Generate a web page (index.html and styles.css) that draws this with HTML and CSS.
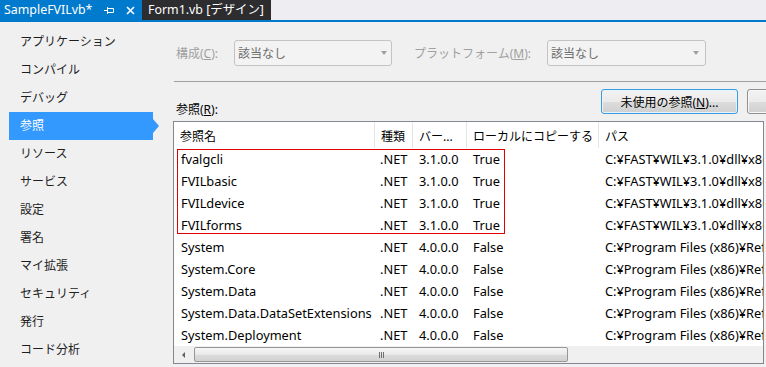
FILE: index.html
```html
<!DOCTYPE html>
<html lang="ja">
<head>
<meta charset="utf-8">
<title>SampleFVILvb</title>
<link rel="stylesheet" href="styles.css">
</head>
<body>
<div class="tabbar">
  <div class="tab tab-active">
    <span class="tab-title">SampleFVILvb*</span>
    <svg class="pin" width="10" height="8" viewBox="0 0 10 8"><path d="M0 4.5H3.5M3.5 1V8M3.5 2.5H9.5V6.5H3.5" fill="none" stroke="#fff" stroke-width="1"/></svg>
    <svg class="close" width="9" height="9" viewBox="0 0 9 9"><path d="M1 1L8 8M8 1L1 8" fill="none" stroke="#fff" stroke-width="1.6"/></svg>
  </div>
  <div class="tab tab-dark"><span class="tab-title">Form1.vb [デザイン]</span></div>
</div>
<div class="page">
  <nav class="sidebar">
    <div class="nav-item">アプリケーション</div>
    <div class="nav-item">コンパイル</div>
    <div class="nav-item">デバッグ</div>
    <div class="nav-item selected">参照</div>
    <div class="nav-item">リソース</div>
    <div class="nav-item">サービス</div>
    <div class="nav-item">設定</div>
    <div class="nav-item">署名</div>
    <div class="nav-item">マイ拡張</div>
    <div class="nav-item">セキュリティ</div>
    <div class="nav-item">発行</div>
    <div class="nav-item">コード分析</div>
  </nav>
  <main class="main">
    <div class="config">
      <span class="cfg-label l1">構成(<u>C</u>):</span>
      <div class="combo c1"><span>該当なし</span><i class="caret"></i></div>
      <span class="cfg-label l2">プラットフォーム(<u>M</u>):</span>
      <div class="combo c2"><span>該当なし</span><i class="caret"></i></div>
    </div>
    <div class="rule"></div>
    <div class="refs-head">
      <span class="refs-label">参照(<u>R</u>):</span>
      <button class="btn btn-primary">未使用の参照(<u>N</u>)...</button>
      <button class="btn btn-cut"></button>
    </div>
    <div class="table">
      <div class="row head">
        <div class="cell">参照名</div>
        <div class="cell">種類</div>
        <div class="cell">バー...</div>
        <div class="cell">ローカルにコピーする</div>
        <div class="cell">パス</div>
      </div>
      <div class="row"><div class="cell name">fvalgcli</div><div class="cell">.NET</div><div class="cell">3.1.0.0</div><div class="cell">True</div><div class="cell">C:¥FAST¥WIL¥3.1.0¥dll¥x86¥</div></div>
      <div class="row"><div class="cell name">FVILbasic</div><div class="cell">.NET</div><div class="cell">3.1.0.0</div><div class="cell">True</div><div class="cell">C:¥FAST¥WIL¥3.1.0¥dll¥x86¥</div></div>
      <div class="row"><div class="cell name">FVILdevice</div><div class="cell">.NET</div><div class="cell">3.1.0.0</div><div class="cell">True</div><div class="cell">C:¥FAST¥WIL¥3.1.0¥dll¥x86¥</div></div>
      <div class="row"><div class="cell name">FVILforms</div><div class="cell">.NET</div><div class="cell">3.1.0.0</div><div class="cell">True</div><div class="cell">C:¥FAST¥WIL¥3.1.0¥dll¥x86¥</div></div>
      <div class="row"><div class="cell name">System</div><div class="cell">.NET</div><div class="cell">4.0.0.0</div><div class="cell">False</div><div class="cell">C:¥Program Files (x86)¥Reference</div></div>
      <div class="row"><div class="cell name">System.Core</div><div class="cell">.NET</div><div class="cell">4.0.0.0</div><div class="cell">False</div><div class="cell">C:¥Program Files (x86)¥Reference</div></div>
      <div class="row"><div class="cell name">System.Data</div><div class="cell">.NET</div><div class="cell">4.0.0.0</div><div class="cell">False</div><div class="cell">C:¥Program Files (x86)¥Reference</div></div>
      <div class="row"><div class="cell name">System.Data.DataSetExtensions</div><div class="cell">.NET</div><div class="cell">4.0.0.0</div><div class="cell">False</div><div class="cell">C:¥Program Files (x86)¥Reference</div></div>
      <div class="row"><div class="cell name">System.Deployment</div><div class="cell">.NET</div><div class="cell">4.0.0.0</div><div class="cell">False</div><div class="cell">C:¥Program Files (x86)¥Reference</div></div>
      <div class="hscroll">
        <div class="sb-btn"><i class="sb-arrow"></i></div>
        <div class="thumb"><i class="grip"></i></div>
      </div>
      <div class="highlight"></div>
    </div>
  </main>
</div>
</body>
</html>
```
FILE: styles.css
```css
* { box-sizing: border-box; margin: 0; padding: 0; }
html, body { width: 766px; height: 367px; overflow: hidden; }
body {
  background: #F0F0F0;
  font-family: "Noto Sans", "Noto Sans CJK JP", sans-serif;
  font-size: 12px;
  color: #1E1E1E;
}
u { text-decoration: underline; text-underline-offset: 1px; }

/* tab bar */
.tabbar {
  display: flex;
  height: 22px;
  background: #EEEEF2;
  border-bottom: 2px solid #007ACC;
}
.tab {
  display: flex;
  align-items: center;
  height: 20px;
  color: #fff;
  font-size: 12.4px;
  line-height: 20px;
  white-space: nowrap;
}
.tab-active { width: 142px; background: #007ACC; padding-left: 4px; }
.tab-dark { background: #2D2D30; padding: 0 7px 0 6px; }
.pin { margin-left: auto; display: block; }
.close { margin: 0 7px 0 12px; display: block; }

/* page */
.page { display: flex; height: 345px; }
.sidebar { width: 160px; flex-shrink: 0; padding-top: 6px; }
.nav-item {
  height: 28px;
  line-height: 28px;
  width: 144px;
  margin-left: 9px;
  padding-left: 11px;
  color: #1E1E1E;
  white-space: nowrap;
}
.nav-item.selected { background: #3399FF; color: #fff; position: relative; }
.nav-item.selected::after {
  content: "";
  position: absolute;
  right: -6px;
  top: 7px;
  border-left: 6px solid #3399FF;
  border-top: 7px solid transparent;
  border-bottom: 7px solid transparent;
}

.main { flex: 1; min-width: 0; overflow: hidden; padding: 18px 0 0 13px; }

.config { display: flex; align-items: center; height: 26px; padding-left: 3px; }
.cfg-label { color: #A0A0A0; white-space: nowrap; flex-shrink: 0; }
.l1 { width: 58px; }
.l2 { width: 133px; margin-left: 22px; }
.combo {
  display: flex;
  align-items: center;
  height: 26px;
  flex-shrink: 0;
  border: 1px solid #C3C3C3;
  border-radius: 3px;
  background: #F3F3F3;
  padding-left: 3px;
  color: #6D6D6D;
}
.c1 { width: 158px; }
.c2 { width: 159px; }
.c1 .caret { margin-right: 4px; }
.c2 .caret { margin-right: 6px; }
.caret {
  margin-left: auto;
  width: 0; height: 0;
  border-top: 4px solid #A0A0A0;
  border-left: 3.5px solid transparent;
  border-right: 3.5px solid transparent;
}

.rule { margin: 15px 0 0 1px; height: 1px; background: #A0A0A0; }

.refs-head { display: flex; width: 620px; height: 25px; margin-top: 7px; }
.refs-label { padding-left: 3px; margin-top: 13px; line-height: 16px; color: #000; white-space: nowrap; }
.btn {
  height: 25px;
  flex-shrink: 0;
  font-family: inherit;
  font-size: 12px;
  color: #000;
  border-radius: 3px;
  background: linear-gradient(#F2F2F2 0%, #EBEBEB 50%, #DDDDDD 51%, #CFCFCF 100%);
}
.btn-primary {
  margin-left: auto;
  width: 137px;
  border: 1px solid #3C9BE0;
  box-shadow: inset 0 0 0 1px #E6F4FC;
}
.btn-cut { margin-left: 9px; width: 46px; border: 1px solid #8E8F8F; box-shadow: inset 0 0 0 1px #F8F8F8; }

/* list */
.table {
  position: relative;
  margin-top: 7px;
  width: 591px;
  height: 243px;
  border: 1px solid #828790;
  background: #fff;
  overflow: hidden;
  display: flex;
  flex-direction: column;
  color: #000;
}
.row {
  display: grid;
  grid-template-columns: 201px 38px 54px 132px 1fr;
  height: 22px;
  flex-shrink: 0;
  font-size: 12.8px;
}
.cell { padding-left: 6px; line-height: 22px; white-space: nowrap; overflow: hidden; }
.cell.name { padding-left: 7px; }
.row .cell:nth-child(2) { padding-left: 5px; }
.head { height: 26px; font-size: 12px; }
.head .cell { line-height: 23px; padding-top: 3px; border-right: 1px solid #E5E5E5; }
.head .cell:nth-child(2) { padding-left: 6px; }
.head .cell:last-child { border-right: none; }

.hscroll {
  margin-top: auto;
  height: 17px;
  flex-shrink: 0;
  background: #F0F0F0;
  display: flex;
  align-items: center;
}
.sb-btn { width: 20px; height: 17px; display: flex; align-items: center; padding-left: 8px; }
.sb-arrow {
  width: 0; height: 0;
  border-right: 3px solid #606060;
  border-top: 3px solid transparent;
  border-bottom: 3px solid transparent;
}
.thumb {
  width: 374px;
  height: 15px;
  border: 1px solid #979797;
  border-radius: 2px;
  background: linear-gradient(#F6F6F6 0%, #E9E9E9 50%, #DCDCDC 51%, #D2D2D2 100%);
  display: flex;
  align-items: center;
  justify-content: center;
}
.grip {
  width: 5px; height: 6px;
  background: linear-gradient(90deg, #6E6E6E 0 1px, transparent 1px 2px, #6E6E6E 2px 3px, transparent 3px 4px, #6E6E6E 4px 5px);
}

.highlight {
  position: absolute;
  left: 3px;
  top: 27px;
  width: 328px;
  height: 85px;
  border: 1px solid #E00000;
  pointer-events: none;
}
```
